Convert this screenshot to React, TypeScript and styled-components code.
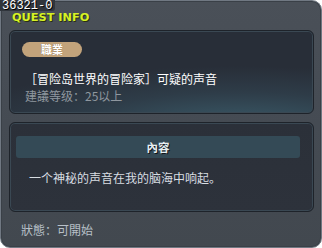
import React from 'react';
import styled, { createGlobalStyle } from 'styled-components';

const GlobalStyle = createGlobalStyle`
  html, body {
    margin: 0;
    padding: 0;
    background: #ffffff;
  }
  body {
    font-family: "Noto Sans CJK SC", "DejaVu Sans", sans-serif;
  }
`;

const Window = styled.div`
  position: relative;
  box-sizing: border-box;
  width: 322px;
  height: 248px;
  padding: 29px 7px 0 8px;
  background: linear-gradient(180deg, #4a5058 0%, #454b53 50%, #42484f 100%);
  border: 1px solid #707882;
  border-radius: 4px 10px 10px 10px;
  box-shadow: inset 0 0 0 1px #3a4047;
  display: flex;
  flex-direction: column;
  gap: 8px;
`;

const QuestId = styled.div`
  position: absolute;
  left: -1px;
  top: -1px;
  height: 11px;
  padding: 0 3px 0 2px;
  background: #30353c;
  color: #ffffff;
  font-family: "Liberation Mono", monospace;
  font-size: 12px;
  line-height: 12px;
  text-shadow: 1px 1px 0 #000000;
  border-bottom-right-radius: 3px;
`;

const Heading = styled.div`
  position: absolute;
  left: 11px;
  top: 12px;
  color: #d6f226;
  font-family: "DejaVu Sans", sans-serif;
  font-weight: bold;
  font-size: 11.3px;
  line-height: 9px;
  text-shadow: 1px 1px 0 #2a3010;
`;

const Panel = styled.div<{ $height: number; $glow?: boolean }>`
  box-sizing: border-box;
  height: ${({ $height }) => $height}px;
  border: 1px solid #1e232a;
  border-radius: 6px;
  box-shadow: inset 0 0 0 1px #3a4853;
  background: ${({ $glow }) =>
    $glow
      ? 'radial-gradient(ellipse 120% 90% at 75% 115%, #3a5a68 0%, #2e3c48 45%, #282e38 80%)'
      : 'linear-gradient(180deg, #2b3039 0%, #2d323b 100%)'};
  display: flex;
  flex-direction: column;
`;

const InfoBody = styled.div`
  padding: 11px 12px 0 12px;
  display: flex;
  flex-direction: column;
`;

const Badge = styled.div`
  align-self: flex-start;
  width: 60px;
  height: 15px;
  border-radius: 8px;
  background: #c2a37b;
  color: #ffffff;
  font-size: 11px;
  font-weight: bold;
  line-height: 15px;
  text-align: center;
  text-shadow: 0 0 1px #7a5e3a;
  margin-bottom: 13px;
`;

const QuestTitle = styled.div`
  color: #ffffff;
  font-size: 12px;
  line-height: 17px;
  padding-left: 3px;
`;

const Hint = styled.div`
  color: #8f979f;
  font-size: 12px;
  line-height: 17px;
  padding-left: 3px;
`;

const ContentBody = styled.div`
  padding: 13px 13px 0 6px;
  display: flex;
  flex-direction: column;
`;

const SectionBar = styled.div`
  height: 22px;
  border-radius: 3px;
  background: #344a56;
  color: #e6eef2;
  font-size: 11.5px;
  font-weight: bold;
  line-height: 22px;
  text-align: center;
  text-shadow: 1px 1px 0 #101418;
  margin-bottom: 11px;
`;

const Description = styled.div`
  color: #d8dde2;
  font-size: 12px;
  line-height: 17px;
  padding-left: 13px;
`;

const Status = styled.div`
  padding: 1px 0 0 12px;
  color: #b8c0c8;
  font-size: 12px;
  line-height: 17px;
`;

const App: React.FC = () => {
  return (
    <>
      <GlobalStyle />
      <Window>
        <QuestId>36321-0</QuestId>
        <Heading>QUEST INFO</Heading>
        <Panel $height={84} $glow>
          <InfoBody>
            <Badge>職業</Badge>
            <QuestTitle>［冒险岛世界的冒险家］可疑的声音</QuestTitle>
            <Hint>建議等级：25以上</Hint>
          </InfoBody>
        </Panel>
        <Panel $height={90}>
          <ContentBody>
            <SectionBar>內容</SectionBar>
            <Description>一个神秘的声音在我的脑海中响起。</Description>
          </ContentBody>
        </Panel>
        <Status>狀態：可開始</Status>
      </Window>
    </>
  );
};

export default App;
